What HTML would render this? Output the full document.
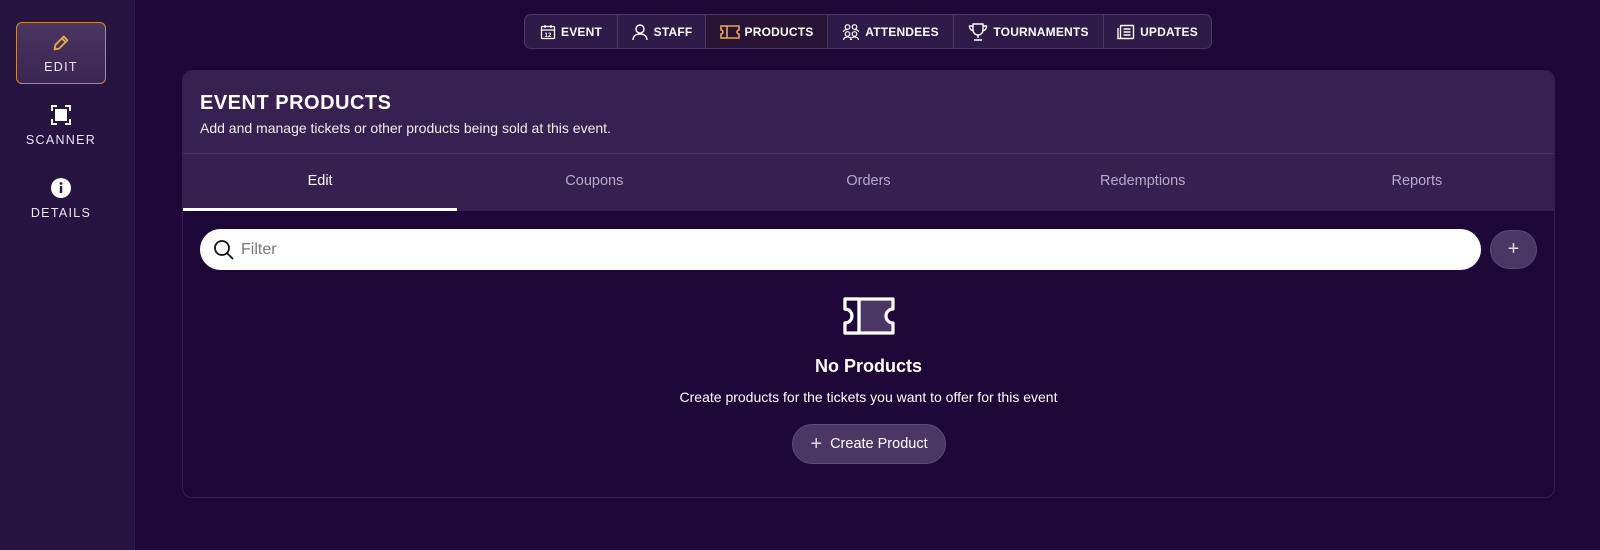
<!DOCTYPE html>
<html><head><meta charset="utf-8"><style>
*{box-sizing:border-box;margin:0;padding:0}
body{width:1600px;height:550px;background:#1d0838;font-family:"Liberation Sans",sans-serif;position:relative;overflow:hidden;color:#fff}
.side{position:absolute;left:0;top:0;width:135px;height:550px;background:#261541;border-right:1px solid #2f1c4a}
.sitem{position:absolute;left:16px;width:90px;text-align:center;font-size:12.5px;letter-spacing:1.3px;color:#ece6f5}
.edit{top:22px;height:62px;border:1px solid #c98a3c;border-radius:6px;background:linear-gradient(#4a3560,#3a2650)}
.nav{position:absolute;left:524px;top:14px;width:688px;height:35px;border:1px solid #4a3864;border-radius:7px;background:#2e1b48;display:flex;overflow:hidden}
.nav div{display:flex;align-items:center;justify-content:center;gap:5px;font-size:12px;font-weight:bold;border-right:1px solid #4a3864;letter-spacing:.2px;white-space:nowrap}
.nav div:last-child{border-right:none}
.card{position:absolute;left:182px;top:70px;width:1373px;height:428px;border:1px solid #33214c;border-radius:10px;overflow:hidden}
.hdr{height:83px;background:#372150;border-bottom:1px solid #4a3364;padding:21px 17px}
.hdr h1{font-size:20px;font-weight:900;letter-spacing:.5px}
.hdr p{font-size:14px;margin-top:5px;color:#eee}
.tabs{height:57px;background:#362050;display:flex;position:relative}
.tabs div{flex:1;text-align:center;line-height:54px;font-size:14.5px;color:#b8aac9}
.tabs div.a{color:#fff;border-bottom:3px solid #fff}
.filter{position:absolute;left:200px;top:229px;width:1281px;height:41px;background:#fff;border-radius:21px;display:flex;align-items:center;padding-left:13px;color:#777;font-size:16px;gap:6px}
.plus{position:absolute;left:1490px;top:230px;width:47px;height:39px;border-radius:20px;background:#4a3763;border:1px solid #5c4975;color:#ddd;text-align:center;line-height:36px;font-size:20px;font-weight:300}
.empty{position:absolute;left:182px;width:1373px;text-align:center}
.btn{position:absolute;left:792px;top:424px;width:154px;height:40px;border-radius:20px;background:#4a3763;border:1px solid #5f4c78;font-size:14.5px;display:flex;align-items:center;justify-content:center;gap:8px}
</style></head><body>
<div class="side">
 <div class="sitem edit"><svg width="22" height="22" viewBox="0 0 24 24" style="margin-top:9px" fill="none" stroke="#e3a94a" stroke-width="2" stroke-linejoin="round"><path d="M5 19l1-5L15 5l4 4-9 9z"/><path d="M13 7l4 4"/></svg><div style="margin-top:3px">EDIT</div></div>
 <div class="sitem" style="top:104px"><svg width="22" height="22" viewBox="0 0 22 22" fill="none" stroke="#fff" stroke-width="2"><path d="M2 7V2h5M15 2h5v5M20 15v5h-5M7 20H2v-5"/><rect x="6" y="6" width="10" height="10" fill="#fff"/></svg><div style="margin-top:4px">SCANNER</div></div>
 <div class="sitem" style="top:177px"><svg width="22" height="22" viewBox="0 0 22 22"><circle cx="11" cy="11" r="10" fill="#fff"/><circle cx="11" cy="6.5" r="1.4" fill="#261541"/><rect x="9.8" y="9" width="2.4" height="7" fill="#261541"/></svg><div style="margin-top:4px">DETAILS</div></div>
</div>
<div class="nav">
 <div style="width:93px"><svg width="16" height="16" viewBox="0 0 16 16" fill="none" stroke="#fff" stroke-width="1.3"><rect x="1.5" y="2.5" width="13" height="12" rx="1"/><path d="M1.5 6h13M5 1v3M11 1v3"/><text x="8" y="13" font-size="6" fill="#fff" stroke="none" text-anchor="middle">12</text></svg>EVENT</div>
 <div style="width:88px"><svg width="18" height="18" viewBox="0 0 18 18" fill="none" stroke="#fff" stroke-width="1.4"><circle cx="9" cy="6" r="4"/><path d="M2 17c0-4 3-6 7-6s7 2 7 6"/></svg>STAFF</div>
 <div style="width:122px;background:#2a1436"><svg width="20" height="16" viewBox="0 0 20 16" fill="none" stroke="#e3a94a" stroke-width="1.6"><path d="M1 2h18v4a2 2 0 000 4v4H1v-4a2 2 0 000-4z"/><path d="M7 2v12"/></svg>PRODUCTS</div>
 <div style="width:126px"><svg width="18" height="18" viewBox="0 0 18 18" fill="none" stroke="#fff" stroke-width="1.2"><circle cx="5.5" cy="4" r="2.3"/><circle cx="12.5" cy="4" r="2.3"/><circle cx="5.5" cy="11" r="2.3"/><circle cx="12.5" cy="11" r="2.3"/><path d="M1.5 9c0-2 2-2.5 4-2.5M16.5 9c0-2-2-2.5-4-2.5M1.5 17c0-2 2-3 4-3s4 1 4 3M8.5 17c0-2 2-3 4-3s4 1 4 3"/></svg>ATTENDEES</div>
 <div style="width:150px"><svg width="20" height="18" viewBox="0 0 20 18" fill="none" stroke="#fff" stroke-width="1.4"><path d="M5 1h10v6a5 5 0 01-10 0z"/><path d="M5 3H1.5c0 3 1.5 4.5 3.8 4.5M15 3h3.5c0 3-1.5 4.5-3.8 4.5M10 12v3M6 17h8"/></svg>TOURNAMENTS</div>
 <div style="width:107px"><svg width="18" height="16" viewBox="0 0 18 16" fill="none" stroke="#fff" stroke-width="1.4"><rect x="3.5" y="1.5" width="13" height="13" rx="1"/><path d="M1 4v10.5h2.5M6.5 5h7M6.5 8h7M6.5 11h7"/></svg>UPDATES</div>
</div>
<div class="card">
 <div class="hdr"><h1>EVENT PRODUCTS</h1><p>Add and manage tickets or other products being sold at this event.</p></div>
 <div class="tabs"><div class="a">Edit</div><div>Coupons</div><div>Orders</div><div>Redemptions</div><div>Reports</div></div>
</div>
<div class="filter"><svg width="22" height="22" viewBox="0 0 22 22" fill="none" stroke="#111" stroke-width="1.8"><circle cx="9" cy="9" r="7"/><path d="M14 14l6 6"/></svg>Filter</div>
<div class="plus">+</div>
<div class="empty" style="top:297px"><svg width="52" height="38" viewBox="0 0 52 38" fill="none" stroke="#fff" stroke-width="3.2" stroke-linejoin="round"><path d="M2 2h48v10a7 7 0 000 14v10H2V26a7 7 0 000-14z" fill="#4a3763"/><path d="M2 2h14v34H2V26a7 7 0 000-14z" fill="#1d0838"/><path d="M16 2v34"/></svg></div>
<div class="empty" style="top:356px;font-size:18px;font-weight:bold">No Products</div>
<div class="empty" style="top:389px;font-size:14px">Create products for the tickets you want to offer for this event</div>
<div class="btn"><span style="font-size:20px;font-weight:300;color:#ddd">+</span>Create Product</div>
</body></html>
